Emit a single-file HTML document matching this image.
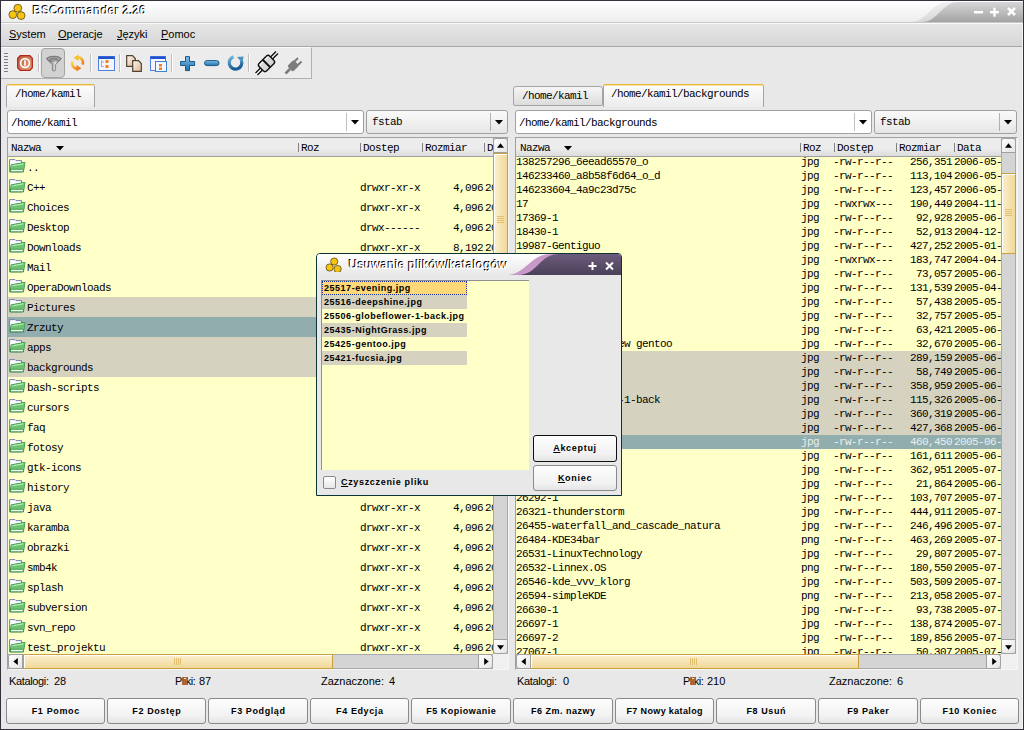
<!DOCTYPE html><html><head><meta charset="utf-8"><style>
*{margin:0;padding:0;box-sizing:border-box}
html,body{width:1024px;height:730px;overflow:hidden;background:#e8e8e8}
body{position:relative;font-family:"Liberation Sans",sans-serif}
.abs{position:absolute}
.m{position:absolute;font-family:"Liberation Mono",monospace;font-size:11px;letter-spacing:-0.6px;white-space:pre;line-height:14px;color:#000}
.s{position:absolute;font-family:"Liberation Sans",sans-serif;white-space:pre;color:#000}
.btn{position:absolute;border:1px solid #8a8a8a;border-radius:3px;background:linear-gradient(#fdfdfd,#f2f2f2 70%,#e4e4e4);font-family:"Liberation Sans",sans-serif;font-weight:bold;font-size:9px;letter-spacing:0.7px;text-align:center;white-space:pre;color:#000}
.sb{position:absolute;background:#d4d4d4}
.arr{position:absolute;background:linear-gradient(135deg,#ffffff,#e4e4e4);border:1px solid #a0a0a0;border-radius:3px}
.sl{position:absolute;border:1px solid #c8a040;box-shadow:inset 1px 1px 0 #fff;background:linear-gradient(90deg,#fcf0d0,#f0d898)}
.slh{position:absolute;border:1px solid #c8a040;box-shadow:inset 1px 1px 0 #fff;background:linear-gradient(#fcf0d0,#f0d898)}
</style></head><body>

<div class="abs" style="left:0;top:0;width:1024px;height:730px;border:1px solid #34303c"></div>
<div class="abs" style="left:1022px;top:23px;width:1px;height:706px;background:#f4f4f4"></div>
<svg class="abs" style="left:1px;top:1px" width="1022" height="22" viewBox="0 0 1022 22">
<defs><linearGradient id="tg" x1="0" y1="0" x2="0" y2="1"><stop offset="0" stop-color="#ffffff"/><stop offset="1" stop-color="#ececec"/></linearGradient>
<linearGradient id="tg2" x1="0" y1="0" x2="0" y2="1"><stop offset="0" stop-color="#d6d6d6"/><stop offset="1" stop-color="#a4a4a4"/></linearGradient>
<linearGradient id="tg3" x1="0" y1="0" x2="0" y2="1"><stop offset="0" stop-color="#f0f0f0"/><stop offset="1" stop-color="#d8d8d8"/></linearGradient></defs>
<rect width="1022" height="22" fill="url(#tg)"/>
<path d="M909 21 C927 21 929 1 948 1 L1022 1 L1022 21 Z" fill="url(#tg3)"/>
<path d="M920 21 C938 21 940 1 958 1 L1022 1 L1022 21 Z" fill="url(#tg2)"/>
<rect y="21" width="1022" height="1" fill="#c8c8c8"/>
<g fill="#fff" stroke="#fff"><rect x="973" y="10" width="9" height="2.4" stroke="none"/>
<rect x="989" y="10" width="9" height="2.4" stroke="none"/><rect x="992.3" y="6.7" width="2.4" height="9" stroke="none"/>
<path d="M1007 7 L1014 14 M1014 7 L1007 14" stroke-width="2.6"/></g>
</svg>
<svg class="abs" style="left:8px;top:2px" width="20" height="19" viewBox="0 0 20 19"><circle cx="9.8" cy="6.2" r="3.9" fill="#f6c414" stroke="#5a4a10" stroke-width="0.8"/><circle cx="4.8" cy="12.6" r="3.9" fill="#f6c414" stroke="#5a4a10" stroke-width="0.8"/><circle cx="13.1" cy="13.6" r="3.9" fill="#f6c414" stroke="#5a4a10" stroke-width="0.8"/></svg>
<div class="s" style="left:32px;top:3px;font-size:12px;line-height:14px;font-weight:bold;color:#000">BSCommander 2.26</div><div class="s" style="left:33px;top:4px;font-size:12px;line-height:14px;font-weight:bold;color:#fff">BSCommander 2.26</div>
<div class="abs" style="left:1px;top:23px;width:1021px;height:24px;background:linear-gradient(#e6e6e6,#d6d6d6);border-top:1px solid #fafafa;border-bottom:1px solid #a8a8a8"></div>
<div class="s" style="left:9px;top:28px;font-size:11px;line-height:12px;"><span style="text-decoration:underline">S</span>ystem</div>
<div class="s" style="left:58px;top:28px;font-size:11px;line-height:12px;"><span style="text-decoration:underline">O</span>peracje</div>
<div class="s" style="left:117px;top:28px;font-size:11px;line-height:12px;"><span style="text-decoration:underline">J</span>ęzyki</div>
<div class="s" style="left:161px;top:28px;font-size:11px;line-height:12px;"><span style="text-decoration:underline">P</span>omoc</div>
<div class="abs" style="left:1px;top:47px;width:311px;height:32px;border-top:1px solid #fafafa;border-right:1px solid #b0b0b0;border-bottom:1px solid #b0b0b0;background:#ececec"></div>
<div class="abs" style="left:4px;top:53px;width:4px;height:1px;background:#808080"></div>
<div class="abs" style="left:4px;top:56px;width:4px;height:1px;background:#808080"></div>
<div class="abs" style="left:4px;top:59px;width:4px;height:1px;background:#808080"></div>
<div class="abs" style="left:4px;top:62px;width:4px;height:1px;background:#808080"></div>
<div class="abs" style="left:4px;top:65px;width:4px;height:1px;background:#808080"></div>
<div class="abs" style="left:4px;top:68px;width:4px;height:1px;background:#808080"></div>
<div class="abs" style="left:4px;top:71px;width:4px;height:1px;background:#808080"></div>
<div class="abs" style="left:38px;top:54px;width:1px;height:18px;background:#c0c0c0"></div><div class="abs" style="left:39px;top:54px;width:1px;height:18px;background:#fff"></div>
<div class="abs" style="left:90px;top:54px;width:1px;height:18px;background:#c0c0c0"></div><div class="abs" style="left:91px;top:54px;width:1px;height:18px;background:#fff"></div>
<div class="abs" style="left:119px;top:54px;width:1px;height:18px;background:#c0c0c0"></div><div class="abs" style="left:120px;top:54px;width:1px;height:18px;background:#fff"></div>
<div class="abs" style="left:171px;top:54px;width:1px;height:18px;background:#c0c0c0"></div><div class="abs" style="left:172px;top:54px;width:1px;height:18px;background:#fff"></div>
<div class="abs" style="left:248px;top:54px;width:1px;height:18px;background:#c0c0c0"></div><div class="abs" style="left:249px;top:54px;width:1px;height:18px;background:#fff"></div>
<div class="abs" style="left:41px;top:48px;width:24px;height:30px;border:1px solid #a4a4a4;border-radius:4px;background:#d2d2d2"></div>
<svg class="abs" style="left:17px;top:55px" width="16" height="16" viewBox="0 0 16 16"><defs><linearGradient id="pw" x1="0" y1="0" x2="1" y2="1"><stop offset="0" stop-color="#c05838"/><stop offset="1" stop-color="#e8a880"/></linearGradient></defs><path d="M3.2 0.7 H12.8 L15.3 3.2 V12.8 L12.8 15.3 H3.2 L0.7 12.8 V3.2 Z" fill="url(#pw)" stroke="#b02818" stroke-width="1.3"/><circle cx="8" cy="8" r="4.4" fill="none" stroke="#fff" stroke-width="1.6"/><rect x="7.2" y="5.2" width="1.6" height="5.6" fill="#fff"/></svg><svg class="abs" style="left:46px;top:55px" width="16" height="17" viewBox="0 0 16 17"><defs><linearGradient id="fn" x1="0" y1="0" x2="1" y2="0"><stop offset="0" stop-color="#404040"/><stop offset="0.6" stop-color="#e0e0e0"/><stop offset="1" stop-color="#505050"/></linearGradient><linearGradient id="fr" x1="0" y1="0" x2="0" y2="1"><stop offset="0" stop-color="#8a8a8a"/><stop offset="1" stop-color="#d8d8d8"/></linearGradient></defs><path d="M0.6 4 C0.6 1 15.2 1 15.2 4 L9.6 9.5 L9.6 15 C9.6 16.3 6.4 16.3 6.4 15 L6.4 9.5 Z" fill="url(#fn)" stroke="#6a6a6a" stroke-width="0.7"/><ellipse cx="7.9" cy="3.6" rx="6.8" ry="2.4" fill="url(#fr)" stroke="#606060" stroke-width="0.6"/><ellipse cx="7.9" cy="4" rx="5" ry="1.3" fill="#8a8a8a"/></svg><svg class="abs" style="left:69px;top:54px" width="17" height="18" viewBox="0 0 17 18"><defs><linearGradient id="or" x1="0" y1="0" x2="1" y2="1"><stop offset="0" stop-color="#ffe040"/><stop offset="1" stop-color="#f07818"/></linearGradient></defs><g fill="none" stroke="url(#or)" stroke-width="2.6" stroke-linecap="butt"><path d="M7.5 3.4 A5.4 5.4 0 0 1 13.6 10.6"/><path d="M9.5 14.6 A5.4 5.4 0 0 1 3.4 7.4"/></g><path d="M4.5 3.8 L9.5 0.5 L9.5 7 Z" fill="#f8c030"/><path d="M12.5 14.2 L7.5 17.5 L7.5 11 Z" fill="#f08020"/></svg><svg class="abs" style="left:98px;top:56px" width="17" height="15" viewBox="0 0 17 15"><rect x="0.5" y="0.5" width="16" height="14" fill="#f4f6ff" stroke="#5080e0" stroke-width="1"/><rect x="0.5" y="0.5" width="16" height="2.5" fill="#2050d0"/><rect x="7.5" y="4" width="3" height="3" fill="#f08020"/><rect x="7.5" y="9" width="3" height="3" fill="#f08020"/><path d="M3.5 4 L3.5 11 M3.5 6 L6 6 M3.5 10.5 L6 10.5" stroke="#a0a0a0" stroke-width="0.8" fill="none"/></svg><svg class="abs" style="left:126px;top:55px" width="17" height="17" viewBox="0 0 17 17"><defs><linearGradient id="cp" x1="0" y1="0" x2="1" y2="1"><stop offset="0" stop-color="#fff8f0"/><stop offset="1" stop-color="#d8b890"/></linearGradient></defs><path d="M0.7 0.7 L6.5 0.7 L9.3 3.5 L9.3 11.3 L0.7 11.3 Z" fill="url(#cp)" stroke="#504030" stroke-width="1.2"/><path d="M6.7 5.7 L12.5 5.7 L15.3 8.5 L15.3 16.3 L6.7 16.3 Z" fill="url(#cp)" stroke="#504030" stroke-width="1.2"/></svg><svg class="abs" style="left:150px;top:56px" width="17" height="16" viewBox="0 0 17 16"><rect x="0.5" y="0.5" width="15" height="14" fill="#f4f6ff" stroke="#5080e0" stroke-width="1"/><rect x="0.5" y="0.5" width="15" height="2.5" fill="#2050d0"/><rect x="5.5" y="5.5" width="11" height="10" fill="#f4f6ff" stroke="#4080d0" stroke-width="1"/><rect x="9" y="8" width="3" height="2.5" fill="#f08020"/><rect x="9" y="11.5" width="3" height="2.5" fill="#f08020"/></svg><svg class="abs" style="left:180px;top:56px" width="16" height="16" viewBox="0 0 16 16"><defs><linearGradient id="bl" x1="0" y1="0" x2="0" y2="1"><stop offset="0" stop-color="#80c0e8"/><stop offset="1" stop-color="#2070a8"/></linearGradient></defs><path d="M5.5 0.6 H9.5 V5.5 H14.6 V9.5 H9.5 V14.6 H5.5 V9.5 H0.6 V5.5 H5.5 Z" fill="url(#bl)" stroke="#1a5a88" stroke-width="1" stroke-linejoin="round"/></svg><svg class="abs" style="left:204px;top:60px" width="16" height="7" viewBox="0 0 16 7"><rect x="0.6" y="0.6" width="14.4" height="5" rx="2.4" fill="url(#bl)" stroke="#1a5a88" stroke-width="1"/></svg><svg class="abs" style="left:226px;top:54px" width="19" height="19" viewBox="0 0 19 19"><defs><linearGradient id="rb" x1="0" y1="0" x2="0.3" y2="1"><stop offset="0" stop-color="#70b8e0"/><stop offset="1" stop-color="#1a5c94"/></linearGradient></defs><path d="M7.5 2.8 A6.3 6.3 0 1 0 15.4 6.6" fill="none" stroke="url(#rb)" stroke-width="3.2"/><path d="M11 3 L17.5 2.5 L16.5 9 Z" fill="#4a90c0"/></svg><svg class="abs" style="left:254px;top:51px" width="25" height="25" viewBox="0 0 25 25"><g stroke="#000" stroke-width="1.1"><path d="M1.5 22 L6.5 17 M3.5 24 L8.5 19 M16.5 6 L22 0.5 M18.5 8 L24 2.5"/></g><g transform="rotate(-45 12.5 12.5)"><rect x="5" y="7.2" width="15" height="10.6" rx="2.5" fill="#d8d8d8" stroke="#101010" stroke-width="1.4"/><path d="M12.5 7.2 V17.8" stroke="#101010" stroke-width="1.8"/><path d="M6.5 9 H11 M14 9 H18.5" stroke="#f8f8f8" stroke-width="1.2"/></g></svg><svg class="abs" style="left:284px;top:56px" width="20" height="19" viewBox="0 0 20 19"><g stroke="#7c7c7c" stroke-linecap="butt"><path d="M1.5 17.5 L6 13" stroke-width="2.6"/><path d="M10 6 L14 2 M13.5 9.5 L17.5 5.5" stroke-width="2"/></g><g transform="rotate(-45 9.5 9.5)"><rect x="4.5" y="5.5" width="9" height="8" rx="2" fill="#7c7c7c"/></g></svg>
<div class="abs" style="left:6px;top:84px;width:89px;height:23px;background:linear-gradient(#fdfdfd,#ececec);border:1px solid #a4a4a4;border-bottom:none;border-radius:3px 3px 0 0;"></div>
<div class="abs" style="left:7px;top:84px;width:87px;height:1px;background:#e8b838"></div><div class="abs" style="left:7px;top:85px;width:87px;height:1px;background:#f8e0a0"></div>
<div class="m" style="left:15px;top:87px">/home/kamil</div>
<div class="abs" style="left:513px;top:86px;width:90px;height:20px;background:linear-gradient(#f6f6f6,#dcdcdc);border:1px solid #a4a4a4;border-radius:3px 3px 2px 2px;"></div>
<div class="m" style="left:522px;top:89px">/home/kamil</div>
<div class="abs" style="left:603px;top:84px;width:161px;height:23px;background:linear-gradient(#fdfdfd,#ececec);border:1px solid #a4a4a4;border-bottom:none;border-radius:3px 3px 0 0;"></div>
<div class="abs" style="left:604px;top:84px;width:159px;height:1px;background:#e8b838"></div><div class="abs" style="left:604px;top:85px;width:159px;height:1px;background:#f8e0a0"></div>
<div class="m" style="left:611px;top:87px">/home/kamil/backgrounds</div>
<div class="abs" style="left:7px;top:110px;width:357px;height:24px;background:#fff;border:1px solid #a0a0a0;border-radius:3px"></div>
<div class="abs" style="left:346px;top:113px;width:1px;height:18px;background:#c0c0c0"></div>
<svg class="abs" style="left:351px;top:120px" width="8" height="5" viewBox="0 0 8 5"><path d="M0 0 H8 L4 4.5 Z" fill="#000"/></svg>
<div class="m" style="left:11px;top:116px">/home/kamil</div>
<div class="abs" style="left:366px;top:110px;width:142px;height:24px;background:linear-gradient(#fafafa,#e6e6e6);border:1px solid #a0a0a0;border-radius:3px"></div>
<div class="abs" style="left:490px;top:113px;width:1px;height:18px;background:#b0b0b0"></div>
<svg class="abs" style="left:495px;top:120px" width="8" height="5" viewBox="0 0 8 5"><path d="M0 0 H8 L4 4.5 Z" fill="#000"/></svg>
<div class="m" style="left:372px;top:115px">fstab</div>
<div class="abs" style="left:515px;top:110px;width:357px;height:24px;background:#fff;border:1px solid #a0a0a0;border-radius:3px"></div>
<div class="abs" style="left:854px;top:113px;width:1px;height:18px;background:#c0c0c0"></div>
<svg class="abs" style="left:859px;top:120px" width="8" height="5" viewBox="0 0 8 5"><path d="M0 0 H8 L4 4.5 Z" fill="#000"/></svg>
<div class="m" style="left:519px;top:116px">/home/kamil/backgrounds</div>
<div class="abs" style="left:874px;top:110px;width:143px;height:24px;background:linear-gradient(#fafafa,#e6e6e6);border:1px solid #a0a0a0;border-radius:3px"></div>
<div class="abs" style="left:999px;top:113px;width:1px;height:18px;background:#b0b0b0"></div>
<svg class="abs" style="left:1004px;top:120px" width="8" height="5" viewBox="0 0 8 5"><path d="M0 0 H8 L4 4.5 Z" fill="#000"/></svg>
<div class="m" style="left:880px;top:115px">fstab</div>
<div class="abs" style="left:7px;top:137px;width:502px;height:533px;border:1px solid #a0a0a0;border-right-color:#f6f6f6;border-bottom-color:#f6f6f6;background:#f0f0f0"></div>
<div class="abs" style="left:8px;top:156px;width:485px;height:498px;background:#ffffc8"></div>
<div class="abs" style="left:8px;top:138px;width:485px;height:19px;background:linear-gradient(#ececec 60%,#dcdcdc);border-bottom:1px solid #a0a0a0"></div>
<div class="m" style="left:11px;top:141px">Nazwa</div>
<div class="abs" style="left:298px;top:143px;width:1px;height:9px;background:#808080"></div>
<div class="m" style="left:301px;top:141px">Roz</div>
<div class="abs" style="left:360px;top:143px;width:1px;height:9px;background:#808080"></div>
<div class="m" style="left:363px;top:141px">Dostęp</div>
<div class="abs" style="left:422px;top:143px;width:1px;height:9px;background:#808080"></div>
<div class="m" style="left:425px;top:141px">Rozmiar</div>
<div class="abs" style="left:484px;top:143px;width:1px;height:9px;background:#808080"></div>
<div class="m" style="left:487px;top:141px">D</div>
<svg class="abs" style="left:56px;top:146px" width="8" height="5" viewBox="0 0 8 5"><path d="M0 0 H8 L4 4.5 Z" fill="#000"/></svg>
<div class="abs" style="left:8px;top:157px;width:485px;height:497px;overflow:hidden">
<svg class="abs" style="left:1px;top:2px" width="17" height="14" viewBox="0 0 17 14"><path d="M0.6 12.8 V0.6 H6 L7 1.6 H12.6 V12.8 Z" fill="#fbfbff" stroke="#7880a8" stroke-width="1"/><path d="M1.2 12.9 L2.2 5.9 L15.9 3.4 L14.4 12.9 Z" fill="#f6f6f6" stroke="#1e8a30" stroke-width="1"/><path d="M2.2 5.9 L15.9 3.4 L14.8 10.4 L1.6 10.4 Z" fill="#6ec072"/><path d="M1.6 10.3 L14.8 10.3" stroke="#2a9a3a" stroke-width="0.7"/><path d="M3.2 6.9 L14.6 4.8" stroke="#b4f4b4" stroke-width="1"/></svg>
<div class="m" style="left:19px;top:4px">..</div>
<svg class="abs" style="left:1px;top:22px" width="17" height="14" viewBox="0 0 17 14"><path d="M0.6 12.8 V0.6 H6 L7 1.6 H12.6 V12.8 Z" fill="#fbfbff" stroke="#7880a8" stroke-width="1"/><path d="M1.2 12.9 L2.2 5.9 L15.9 3.4 L14.4 12.9 Z" fill="#f6f6f6" stroke="#1e8a30" stroke-width="1"/><path d="M2.2 5.9 L15.9 3.4 L14.8 10.4 L1.6 10.4 Z" fill="#6ec072"/><path d="M1.6 10.3 L14.8 10.3" stroke="#2a9a3a" stroke-width="0.7"/><path d="M3.2 6.9 L14.6 4.8" stroke="#b4f4b4" stroke-width="1"/></svg>
<div class="m" style="left:19px;top:24px">C++</div>
<div class="m" style="left:352px;top:24px">drwxr-xr-x</div>
<div class="m" style="left:410px;top:24px;width:65px;text-align:right">4,096</div>
<div class="m" style="left:477px;top:24px">20</div>
<svg class="abs" style="left:1px;top:42px" width="17" height="14" viewBox="0 0 17 14"><path d="M0.6 12.8 V0.6 H6 L7 1.6 H12.6 V12.8 Z" fill="#fbfbff" stroke="#7880a8" stroke-width="1"/><path d="M1.2 12.9 L2.2 5.9 L15.9 3.4 L14.4 12.9 Z" fill="#f6f6f6" stroke="#1e8a30" stroke-width="1"/><path d="M2.2 5.9 L15.9 3.4 L14.8 10.4 L1.6 10.4 Z" fill="#6ec072"/><path d="M1.6 10.3 L14.8 10.3" stroke="#2a9a3a" stroke-width="0.7"/><path d="M3.2 6.9 L14.6 4.8" stroke="#b4f4b4" stroke-width="1"/></svg>
<div class="m" style="left:19px;top:44px">Choices</div>
<div class="m" style="left:352px;top:44px">drwxr-xr-x</div>
<div class="m" style="left:410px;top:44px;width:65px;text-align:right">4,096</div>
<div class="m" style="left:477px;top:44px">20</div>
<svg class="abs" style="left:1px;top:62px" width="17" height="14" viewBox="0 0 17 14"><path d="M0.6 12.8 V0.6 H6 L7 1.6 H12.6 V12.8 Z" fill="#fbfbff" stroke="#7880a8" stroke-width="1"/><path d="M1.2 12.9 L2.2 5.9 L15.9 3.4 L14.4 12.9 Z" fill="#f6f6f6" stroke="#1e8a30" stroke-width="1"/><path d="M2.2 5.9 L15.9 3.4 L14.8 10.4 L1.6 10.4 Z" fill="#6ec072"/><path d="M1.6 10.3 L14.8 10.3" stroke="#2a9a3a" stroke-width="0.7"/><path d="M3.2 6.9 L14.6 4.8" stroke="#b4f4b4" stroke-width="1"/></svg>
<div class="m" style="left:19px;top:64px">Desktop</div>
<div class="m" style="left:352px;top:64px">drwx------</div>
<div class="m" style="left:410px;top:64px;width:65px;text-align:right">4,096</div>
<div class="m" style="left:477px;top:64px">20</div>
<svg class="abs" style="left:1px;top:82px" width="17" height="14" viewBox="0 0 17 14"><path d="M0.6 12.8 V0.6 H6 L7 1.6 H12.6 V12.8 Z" fill="#fbfbff" stroke="#7880a8" stroke-width="1"/><path d="M1.2 12.9 L2.2 5.9 L15.9 3.4 L14.4 12.9 Z" fill="#f6f6f6" stroke="#1e8a30" stroke-width="1"/><path d="M2.2 5.9 L15.9 3.4 L14.8 10.4 L1.6 10.4 Z" fill="#6ec072"/><path d="M1.6 10.3 L14.8 10.3" stroke="#2a9a3a" stroke-width="0.7"/><path d="M3.2 6.9 L14.6 4.8" stroke="#b4f4b4" stroke-width="1"/></svg>
<div class="m" style="left:19px;top:84px">Downloads</div>
<div class="m" style="left:352px;top:84px">drwxr-xr-x</div>
<div class="m" style="left:410px;top:84px;width:65px;text-align:right">8,192</div>
<div class="m" style="left:477px;top:84px">20</div>
<svg class="abs" style="left:1px;top:102px" width="17" height="14" viewBox="0 0 17 14"><path d="M0.6 12.8 V0.6 H6 L7 1.6 H12.6 V12.8 Z" fill="#fbfbff" stroke="#7880a8" stroke-width="1"/><path d="M1.2 12.9 L2.2 5.9 L15.9 3.4 L14.4 12.9 Z" fill="#f6f6f6" stroke="#1e8a30" stroke-width="1"/><path d="M2.2 5.9 L15.9 3.4 L14.8 10.4 L1.6 10.4 Z" fill="#6ec072"/><path d="M1.6 10.3 L14.8 10.3" stroke="#2a9a3a" stroke-width="0.7"/><path d="M3.2 6.9 L14.6 4.8" stroke="#b4f4b4" stroke-width="1"/></svg>
<div class="m" style="left:19px;top:104px">Mail</div>
<div class="m" style="left:352px;top:104px">drwxr-xr-x</div>
<div class="m" style="left:410px;top:104px;width:65px;text-align:right">4,096</div>
<div class="m" style="left:477px;top:104px">20</div>
<svg class="abs" style="left:1px;top:122px" width="17" height="14" viewBox="0 0 17 14"><path d="M0.6 12.8 V0.6 H6 L7 1.6 H12.6 V12.8 Z" fill="#fbfbff" stroke="#7880a8" stroke-width="1"/><path d="M1.2 12.9 L2.2 5.9 L15.9 3.4 L14.4 12.9 Z" fill="#f6f6f6" stroke="#1e8a30" stroke-width="1"/><path d="M2.2 5.9 L15.9 3.4 L14.8 10.4 L1.6 10.4 Z" fill="#6ec072"/><path d="M1.6 10.3 L14.8 10.3" stroke="#2a9a3a" stroke-width="0.7"/><path d="M3.2 6.9 L14.6 4.8" stroke="#b4f4b4" stroke-width="1"/></svg>
<div class="m" style="left:19px;top:124px">OperaDownloads</div>
<div class="m" style="left:352px;top:124px">drwxr-xr-x</div>
<div class="m" style="left:410px;top:124px;width:65px;text-align:right">4,096</div>
<div class="m" style="left:477px;top:124px">20</div>
<div class="abs" style="left:0;top:140px;width:485px;height:20px;background:#d5d3c0"></div>
<svg class="abs" style="left:1px;top:142px" width="17" height="14" viewBox="0 0 17 14"><path d="M0.6 12.8 V0.6 H6 L7 1.6 H12.6 V12.8 Z" fill="#fbfbff" stroke="#7880a8" stroke-width="1"/><path d="M1.2 12.9 L2.2 5.9 L15.9 3.4 L14.4 12.9 Z" fill="#f6f6f6" stroke="#1e8a30" stroke-width="1"/><path d="M2.2 5.9 L15.9 3.4 L14.8 10.4 L1.6 10.4 Z" fill="#6ec072"/><path d="M1.6 10.3 L14.8 10.3" stroke="#2a9a3a" stroke-width="0.7"/><path d="M3.2 6.9 L14.6 4.8" stroke="#b4f4b4" stroke-width="1"/></svg>
<div class="m" style="left:19px;top:144px">Pictures</div>
<div class="m" style="left:352px;top:144px">drwxr-xr-x</div>
<div class="m" style="left:410px;top:144px;width:65px;text-align:right">4,096</div>
<div class="m" style="left:477px;top:144px">20</div>
<div class="abs" style="left:0;top:160px;width:485px;height:20px;background:#91adad"></div>
<svg class="abs" style="left:1px;top:162px" width="17" height="14" viewBox="0 0 17 14"><path d="M0.6 12.8 V0.6 H6 L7 1.6 H12.6 V12.8 Z" fill="#fbfbff" stroke="#7880a8" stroke-width="1"/><path d="M1.2 12.9 L2.2 5.9 L15.9 3.4 L14.4 12.9 Z" fill="#f6f6f6" stroke="#1e8a30" stroke-width="1"/><path d="M2.2 5.9 L15.9 3.4 L14.8 10.4 L1.6 10.4 Z" fill="#6ec072"/><path d="M1.6 10.3 L14.8 10.3" stroke="#2a9a3a" stroke-width="0.7"/><path d="M3.2 6.9 L14.6 4.8" stroke="#b4f4b4" stroke-width="1"/></svg>
<div class="m" style="left:19px;top:164px">Zrzuty</div>
<div class="m" style="left:352px;top:164px">drwxr-xr-x</div>
<div class="m" style="left:410px;top:164px;width:65px;text-align:right">4,096</div>
<div class="m" style="left:477px;top:164px">20</div>
<div class="abs" style="left:0;top:180px;width:485px;height:20px;background:#d5d3c0"></div>
<svg class="abs" style="left:1px;top:182px" width="17" height="14" viewBox="0 0 17 14"><path d="M0.6 12.8 V0.6 H6 L7 1.6 H12.6 V12.8 Z" fill="#fbfbff" stroke="#7880a8" stroke-width="1"/><path d="M1.2 12.9 L2.2 5.9 L15.9 3.4 L14.4 12.9 Z" fill="#f6f6f6" stroke="#1e8a30" stroke-width="1"/><path d="M2.2 5.9 L15.9 3.4 L14.8 10.4 L1.6 10.4 Z" fill="#6ec072"/><path d="M1.6 10.3 L14.8 10.3" stroke="#2a9a3a" stroke-width="0.7"/><path d="M3.2 6.9 L14.6 4.8" stroke="#b4f4b4" stroke-width="1"/></svg>
<div class="m" style="left:19px;top:184px">apps</div>
<div class="m" style="left:352px;top:184px">drwxr-xr-x</div>
<div class="m" style="left:410px;top:184px;width:65px;text-align:right">4,096</div>
<div class="m" style="left:477px;top:184px">20</div>
<div class="abs" style="left:0;top:200px;width:485px;height:20px;background:#d5d3c0"></div>
<svg class="abs" style="left:1px;top:202px" width="17" height="14" viewBox="0 0 17 14"><path d="M0.6 12.8 V0.6 H6 L7 1.6 H12.6 V12.8 Z" fill="#fbfbff" stroke="#7880a8" stroke-width="1"/><path d="M1.2 12.9 L2.2 5.9 L15.9 3.4 L14.4 12.9 Z" fill="#f6f6f6" stroke="#1e8a30" stroke-width="1"/><path d="M2.2 5.9 L15.9 3.4 L14.8 10.4 L1.6 10.4 Z" fill="#6ec072"/><path d="M1.6 10.3 L14.8 10.3" stroke="#2a9a3a" stroke-width="0.7"/><path d="M3.2 6.9 L14.6 4.8" stroke="#b4f4b4" stroke-width="1"/></svg>
<div class="m" style="left:19px;top:204px">backgrounds</div>
<div class="m" style="left:352px;top:204px">drwxr-xr-x</div>
<div class="m" style="left:410px;top:204px;width:65px;text-align:right">4,096</div>
<div class="m" style="left:477px;top:204px">20</div>
<svg class="abs" style="left:1px;top:222px" width="17" height="14" viewBox="0 0 17 14"><path d="M0.6 12.8 V0.6 H6 L7 1.6 H12.6 V12.8 Z" fill="#fbfbff" stroke="#7880a8" stroke-width="1"/><path d="M1.2 12.9 L2.2 5.9 L15.9 3.4 L14.4 12.9 Z" fill="#f6f6f6" stroke="#1e8a30" stroke-width="1"/><path d="M2.2 5.9 L15.9 3.4 L14.8 10.4 L1.6 10.4 Z" fill="#6ec072"/><path d="M1.6 10.3 L14.8 10.3" stroke="#2a9a3a" stroke-width="0.7"/><path d="M3.2 6.9 L14.6 4.8" stroke="#b4f4b4" stroke-width="1"/></svg>
<div class="m" style="left:19px;top:224px">bash-scripts</div>
<div class="m" style="left:352px;top:224px">drwxr-xr-x</div>
<div class="m" style="left:410px;top:224px;width:65px;text-align:right">4,096</div>
<div class="m" style="left:477px;top:224px">20</div>
<svg class="abs" style="left:1px;top:242px" width="17" height="14" viewBox="0 0 17 14"><path d="M0.6 12.8 V0.6 H6 L7 1.6 H12.6 V12.8 Z" fill="#fbfbff" stroke="#7880a8" stroke-width="1"/><path d="M1.2 12.9 L2.2 5.9 L15.9 3.4 L14.4 12.9 Z" fill="#f6f6f6" stroke="#1e8a30" stroke-width="1"/><path d="M2.2 5.9 L15.9 3.4 L14.8 10.4 L1.6 10.4 Z" fill="#6ec072"/><path d="M1.6 10.3 L14.8 10.3" stroke="#2a9a3a" stroke-width="0.7"/><path d="M3.2 6.9 L14.6 4.8" stroke="#b4f4b4" stroke-width="1"/></svg>
<div class="m" style="left:19px;top:244px">cursors</div>
<div class="m" style="left:352px;top:244px">drwxr-xr-x</div>
<div class="m" style="left:410px;top:244px;width:65px;text-align:right">4,096</div>
<div class="m" style="left:477px;top:244px">20</div>
<svg class="abs" style="left:1px;top:262px" width="17" height="14" viewBox="0 0 17 14"><path d="M0.6 12.8 V0.6 H6 L7 1.6 H12.6 V12.8 Z" fill="#fbfbff" stroke="#7880a8" stroke-width="1"/><path d="M1.2 12.9 L2.2 5.9 L15.9 3.4 L14.4 12.9 Z" fill="#f6f6f6" stroke="#1e8a30" stroke-width="1"/><path d="M2.2 5.9 L15.9 3.4 L14.8 10.4 L1.6 10.4 Z" fill="#6ec072"/><path d="M1.6 10.3 L14.8 10.3" stroke="#2a9a3a" stroke-width="0.7"/><path d="M3.2 6.9 L14.6 4.8" stroke="#b4f4b4" stroke-width="1"/></svg>
<div class="m" style="left:19px;top:264px">faq</div>
<div class="m" style="left:352px;top:264px">drwxr-xr-x</div>
<div class="m" style="left:410px;top:264px;width:65px;text-align:right">4,096</div>
<div class="m" style="left:477px;top:264px">20</div>
<svg class="abs" style="left:1px;top:282px" width="17" height="14" viewBox="0 0 17 14"><path d="M0.6 12.8 V0.6 H6 L7 1.6 H12.6 V12.8 Z" fill="#fbfbff" stroke="#7880a8" stroke-width="1"/><path d="M1.2 12.9 L2.2 5.9 L15.9 3.4 L14.4 12.9 Z" fill="#f6f6f6" stroke="#1e8a30" stroke-width="1"/><path d="M2.2 5.9 L15.9 3.4 L14.8 10.4 L1.6 10.4 Z" fill="#6ec072"/><path d="M1.6 10.3 L14.8 10.3" stroke="#2a9a3a" stroke-width="0.7"/><path d="M3.2 6.9 L14.6 4.8" stroke="#b4f4b4" stroke-width="1"/></svg>
<div class="m" style="left:19px;top:284px">fotosy</div>
<div class="m" style="left:352px;top:284px">drwxr-xr-x</div>
<div class="m" style="left:410px;top:284px;width:65px;text-align:right">4,096</div>
<div class="m" style="left:477px;top:284px">20</div>
<svg class="abs" style="left:1px;top:302px" width="17" height="14" viewBox="0 0 17 14"><path d="M0.6 12.8 V0.6 H6 L7 1.6 H12.6 V12.8 Z" fill="#fbfbff" stroke="#7880a8" stroke-width="1"/><path d="M1.2 12.9 L2.2 5.9 L15.9 3.4 L14.4 12.9 Z" fill="#f6f6f6" stroke="#1e8a30" stroke-width="1"/><path d="M2.2 5.9 L15.9 3.4 L14.8 10.4 L1.6 10.4 Z" fill="#6ec072"/><path d="M1.6 10.3 L14.8 10.3" stroke="#2a9a3a" stroke-width="0.7"/><path d="M3.2 6.9 L14.6 4.8" stroke="#b4f4b4" stroke-width="1"/></svg>
<div class="m" style="left:19px;top:304px">gtk-icons</div>
<div class="m" style="left:352px;top:304px">drwxr-xr-x</div>
<div class="m" style="left:410px;top:304px;width:65px;text-align:right">4,096</div>
<div class="m" style="left:477px;top:304px">20</div>
<svg class="abs" style="left:1px;top:322px" width="17" height="14" viewBox="0 0 17 14"><path d="M0.6 12.8 V0.6 H6 L7 1.6 H12.6 V12.8 Z" fill="#fbfbff" stroke="#7880a8" stroke-width="1"/><path d="M1.2 12.9 L2.2 5.9 L15.9 3.4 L14.4 12.9 Z" fill="#f6f6f6" stroke="#1e8a30" stroke-width="1"/><path d="M2.2 5.9 L15.9 3.4 L14.8 10.4 L1.6 10.4 Z" fill="#6ec072"/><path d="M1.6 10.3 L14.8 10.3" stroke="#2a9a3a" stroke-width="0.7"/><path d="M3.2 6.9 L14.6 4.8" stroke="#b4f4b4" stroke-width="1"/></svg>
<div class="m" style="left:19px;top:324px">history</div>
<div class="m" style="left:352px;top:324px">drwxr-xr-x</div>
<div class="m" style="left:410px;top:324px;width:65px;text-align:right">4,096</div>
<div class="m" style="left:477px;top:324px">20</div>
<svg class="abs" style="left:1px;top:342px" width="17" height="14" viewBox="0 0 17 14"><path d="M0.6 12.8 V0.6 H6 L7 1.6 H12.6 V12.8 Z" fill="#fbfbff" stroke="#7880a8" stroke-width="1"/><path d="M1.2 12.9 L2.2 5.9 L15.9 3.4 L14.4 12.9 Z" fill="#f6f6f6" stroke="#1e8a30" stroke-width="1"/><path d="M2.2 5.9 L15.9 3.4 L14.8 10.4 L1.6 10.4 Z" fill="#6ec072"/><path d="M1.6 10.3 L14.8 10.3" stroke="#2a9a3a" stroke-width="0.7"/><path d="M3.2 6.9 L14.6 4.8" stroke="#b4f4b4" stroke-width="1"/></svg>
<div class="m" style="left:19px;top:344px">java</div>
<div class="m" style="left:352px;top:344px">drwxr-xr-x</div>
<div class="m" style="left:410px;top:344px;width:65px;text-align:right">4,096</div>
<div class="m" style="left:477px;top:344px">20</div>
<svg class="abs" style="left:1px;top:362px" width="17" height="14" viewBox="0 0 17 14"><path d="M0.6 12.8 V0.6 H6 L7 1.6 H12.6 V12.8 Z" fill="#fbfbff" stroke="#7880a8" stroke-width="1"/><path d="M1.2 12.9 L2.2 5.9 L15.9 3.4 L14.4 12.9 Z" fill="#f6f6f6" stroke="#1e8a30" stroke-width="1"/><path d="M2.2 5.9 L15.9 3.4 L14.8 10.4 L1.6 10.4 Z" fill="#6ec072"/><path d="M1.6 10.3 L14.8 10.3" stroke="#2a9a3a" stroke-width="0.7"/><path d="M3.2 6.9 L14.6 4.8" stroke="#b4f4b4" stroke-width="1"/></svg>
<div class="m" style="left:19px;top:364px">karamba</div>
<div class="m" style="left:352px;top:364px">drwxr-xr-x</div>
<div class="m" style="left:410px;top:364px;width:65px;text-align:right">4,096</div>
<div class="m" style="left:477px;top:364px">20</div>
<svg class="abs" style="left:1px;top:382px" width="17" height="14" viewBox="0 0 17 14"><path d="M0.6 12.8 V0.6 H6 L7 1.6 H12.6 V12.8 Z" fill="#fbfbff" stroke="#7880a8" stroke-width="1"/><path d="M1.2 12.9 L2.2 5.9 L15.9 3.4 L14.4 12.9 Z" fill="#f6f6f6" stroke="#1e8a30" stroke-width="1"/><path d="M2.2 5.9 L15.9 3.4 L14.8 10.4 L1.6 10.4 Z" fill="#6ec072"/><path d="M1.6 10.3 L14.8 10.3" stroke="#2a9a3a" stroke-width="0.7"/><path d="M3.2 6.9 L14.6 4.8" stroke="#b4f4b4" stroke-width="1"/></svg>
<div class="m" style="left:19px;top:384px">obrazki</div>
<div class="m" style="left:352px;top:384px">drwxr-xr-x</div>
<div class="m" style="left:410px;top:384px;width:65px;text-align:right">4,096</div>
<div class="m" style="left:477px;top:384px">20</div>
<svg class="abs" style="left:1px;top:402px" width="17" height="14" viewBox="0 0 17 14"><path d="M0.6 12.8 V0.6 H6 L7 1.6 H12.6 V12.8 Z" fill="#fbfbff" stroke="#7880a8" stroke-width="1"/><path d="M1.2 12.9 L2.2 5.9 L15.9 3.4 L14.4 12.9 Z" fill="#f6f6f6" stroke="#1e8a30" stroke-width="1"/><path d="M2.2 5.9 L15.9 3.4 L14.8 10.4 L1.6 10.4 Z" fill="#6ec072"/><path d="M1.6 10.3 L14.8 10.3" stroke="#2a9a3a" stroke-width="0.7"/><path d="M3.2 6.9 L14.6 4.8" stroke="#b4f4b4" stroke-width="1"/></svg>
<div class="m" style="left:19px;top:404px">smb4k</div>
<div class="m" style="left:352px;top:404px">drwxr-xr-x</div>
<div class="m" style="left:410px;top:404px;width:65px;text-align:right">4,096</div>
<div class="m" style="left:477px;top:404px">20</div>
<svg class="abs" style="left:1px;top:422px" width="17" height="14" viewBox="0 0 17 14"><path d="M0.6 12.8 V0.6 H6 L7 1.6 H12.6 V12.8 Z" fill="#fbfbff" stroke="#7880a8" stroke-width="1"/><path d="M1.2 12.9 L2.2 5.9 L15.9 3.4 L14.4 12.9 Z" fill="#f6f6f6" stroke="#1e8a30" stroke-width="1"/><path d="M2.2 5.9 L15.9 3.4 L14.8 10.4 L1.6 10.4 Z" fill="#6ec072"/><path d="M1.6 10.3 L14.8 10.3" stroke="#2a9a3a" stroke-width="0.7"/><path d="M3.2 6.9 L14.6 4.8" stroke="#b4f4b4" stroke-width="1"/></svg>
<div class="m" style="left:19px;top:424px">splash</div>
<div class="m" style="left:352px;top:424px">drwxr-xr-x</div>
<div class="m" style="left:410px;top:424px;width:65px;text-align:right">4,096</div>
<div class="m" style="left:477px;top:424px">20</div>
<svg class="abs" style="left:1px;top:442px" width="17" height="14" viewBox="0 0 17 14"><path d="M0.6 12.8 V0.6 H6 L7 1.6 H12.6 V12.8 Z" fill="#fbfbff" stroke="#7880a8" stroke-width="1"/><path d="M1.2 12.9 L2.2 5.9 L15.9 3.4 L14.4 12.9 Z" fill="#f6f6f6" stroke="#1e8a30" stroke-width="1"/><path d="M2.2 5.9 L15.9 3.4 L14.8 10.4 L1.6 10.4 Z" fill="#6ec072"/><path d="M1.6 10.3 L14.8 10.3" stroke="#2a9a3a" stroke-width="0.7"/><path d="M3.2 6.9 L14.6 4.8" stroke="#b4f4b4" stroke-width="1"/></svg>
<div class="m" style="left:19px;top:444px">subversion</div>
<div class="m" style="left:352px;top:444px">drwxr-xr-x</div>
<div class="m" style="left:410px;top:444px;width:65px;text-align:right">4,096</div>
<div class="m" style="left:477px;top:444px">20</div>
<svg class="abs" style="left:1px;top:462px" width="17" height="14" viewBox="0 0 17 14"><path d="M0.6 12.8 V0.6 H6 L7 1.6 H12.6 V12.8 Z" fill="#fbfbff" stroke="#7880a8" stroke-width="1"/><path d="M1.2 12.9 L2.2 5.9 L15.9 3.4 L14.4 12.9 Z" fill="#f6f6f6" stroke="#1e8a30" stroke-width="1"/><path d="M2.2 5.9 L15.9 3.4 L14.8 10.4 L1.6 10.4 Z" fill="#6ec072"/><path d="M1.6 10.3 L14.8 10.3" stroke="#2a9a3a" stroke-width="0.7"/><path d="M3.2 6.9 L14.6 4.8" stroke="#b4f4b4" stroke-width="1"/></svg>
<div class="m" style="left:19px;top:464px">svn_repo</div>
<div class="m" style="left:352px;top:464px">drwxr-xr-x</div>
<div class="m" style="left:410px;top:464px;width:65px;text-align:right">4,096</div>
<div class="m" style="left:477px;top:464px">20</div>
<svg class="abs" style="left:1px;top:482px" width="17" height="14" viewBox="0 0 17 14"><path d="M0.6 12.8 V0.6 H6 L7 1.6 H12.6 V12.8 Z" fill="#fbfbff" stroke="#7880a8" stroke-width="1"/><path d="M1.2 12.9 L2.2 5.9 L15.9 3.4 L14.4 12.9 Z" fill="#f6f6f6" stroke="#1e8a30" stroke-width="1"/><path d="M2.2 5.9 L15.9 3.4 L14.8 10.4 L1.6 10.4 Z" fill="#6ec072"/><path d="M1.6 10.3 L14.8 10.3" stroke="#2a9a3a" stroke-width="0.7"/><path d="M3.2 6.9 L14.6 4.8" stroke="#b4f4b4" stroke-width="1"/></svg>
<div class="m" style="left:19px;top:484px">test_projektu</div>
<div class="m" style="left:352px;top:484px">drwxr-xr-x</div>
<div class="m" style="left:410px;top:484px;width:65px;text-align:right">4,096</div>
<div class="m" style="left:477px;top:484px">20</div>
</div>
<div class="sb" style="left:493px;top:138px;width:15px;height:516px;border-left:1px solid #a8a8b0;border-right:1px solid #a8a8b0"></div>
<div class="arr" style="left:493px;top:138px;width:15px;height:15px;border-radius:3px 3px 0 0"></div>
<svg class="abs" style="left:497px;top:143px" width="7" height="5" viewBox="0 0 7 5"><path d="M0 4.7 H7 L3.5 0.2 Z" fill="#000"/></svg>
<div class="arr" style="left:493px;top:639px;width:15px;height:15px;border-radius:0 0 3px 3px"></div>
<svg class="abs" style="left:497px;top:645px" width="7" height="5" viewBox="0 0 7 5"><path d="M0 0.3 H7 L3.5 4.8 Z" fill="#000"/></svg>
<div class="sl" style="left:493px;top:153px;width:15px;height:134px"></div>
<div class="abs" style="left:497px;top:216px;width:7px;height:1px;background:#e0c070"></div>
<div class="abs" style="left:497px;top:218px;width:7px;height:1px;background:#e0c070"></div>
<div class="abs" style="left:497px;top:220px;width:7px;height:1px;background:#e0c070"></div>
<div class="abs" style="left:497px;top:222px;width:7px;height:1px;background:#e0c070"></div>
<div class="sb" style="left:8px;top:654px;width:485px;height:15px;border-top:1px solid #a8a8b0;border-bottom:1px solid #a8a8b0"></div>
<div class="slh" style="left:23px;top:654px;width:310px;height:15px"></div>
<div class="arr" style="left:8px;top:654px;width:15px;height:15px;border-radius:3px 0 0 3px"></div>
<svg class="abs" style="left:13px;top:658px" width="5" height="7" viewBox="0 0 5 7"><path d="M4.8 0 V7 L0.3 3.5 Z" fill="#000"/></svg>
<div class="arr" style="left:478px;top:654px;width:15px;height:15px;border-radius:0 3px 3px 0"></div>
<svg class="abs" style="left:484px;top:658px" width="5" height="7" viewBox="0 0 5 7"><path d="M0.2 0 V7 L4.7 3.5 Z" fill="#000"/></svg>
<div class="abs" style="left:174px;top:658px;width:1px;height:7px;background:#e0c070"></div>
<div class="abs" style="left:176px;top:658px;width:1px;height:7px;background:#e0c070"></div>
<div class="abs" style="left:178px;top:658px;width:1px;height:7px;background:#e0c070"></div>
<div class="abs" style="left:180px;top:658px;width:1px;height:7px;background:#e0c070"></div>
<div class="abs" style="left:515px;top:137px;width:503px;height:533px;border:1px solid #a0a0a0;border-right-color:#f6f6f6;border-bottom-color:#f6f6f6;background:#f0f0f0"></div>
<div class="abs" style="left:516px;top:156px;width:485px;height:498px;background:#ffffc8"></div>
<div class="abs" style="left:516px;top:138px;width:485px;height:19px;background:linear-gradient(#ececec 60%,#dcdcdc);border-bottom:1px solid #a0a0a0"></div>
<div class="m" style="left:520px;top:141px">Nazwa</div>
<div class="abs" style="left:800px;top:143px;width:1px;height:9px;background:#808080"></div>
<div class="m" style="left:803px;top:141px">Roz</div>
<div class="abs" style="left:834px;top:143px;width:1px;height:9px;background:#808080"></div>
<div class="m" style="left:837px;top:141px">Dostęp</div>
<div class="abs" style="left:896px;top:143px;width:1px;height:9px;background:#808080"></div>
<div class="m" style="left:899px;top:141px">Rozmiar</div>
<div class="abs" style="left:954px;top:143px;width:1px;height:9px;background:#808080"></div>
<div class="m" style="left:957px;top:141px">Data</div>
<svg class="abs" style="left:564px;top:146px" width="8" height="5" viewBox="0 0 8 5"><path d="M0 0 H8 L4 4.5 Z" fill="#000"/></svg>
<div class="abs" style="left:516px;top:157px;width:485px;height:497px;overflow:hidden">
<div class="m" style="left:0px;top:-2px;color:#000">138257296_6eead65570_o</div>
<div class="m" style="left:285px;top:-2px;color:#000">jpg</div>
<div class="m" style="left:317px;top:-2px;color:#000">-rw-r--r--</div>
<div class="m" style="left:380px;top:-2px;width:56px;text-align:right;color:#000">256,351</div>
<div class="m" style="left:438px;top:-2px;color:#000">2006-05-</div>
<div class="m" style="left:0px;top:12px;color:#000">146233460_a8b58f6d64_o_d</div>
<div class="m" style="left:285px;top:12px;color:#000">jpg</div>
<div class="m" style="left:317px;top:12px;color:#000">-rw-r--r--</div>
<div class="m" style="left:380px;top:12px;width:56px;text-align:right;color:#000">113,104</div>
<div class="m" style="left:438px;top:12px;color:#000">2006-05-</div>
<div class="m" style="left:0px;top:26px;color:#000">146233604_4a9c23d75c</div>
<div class="m" style="left:285px;top:26px;color:#000">jpg</div>
<div class="m" style="left:317px;top:26px;color:#000">-rw-r--r--</div>
<div class="m" style="left:380px;top:26px;width:56px;text-align:right;color:#000">123,457</div>
<div class="m" style="left:438px;top:26px;color:#000">2006-05-</div>
<div class="m" style="left:0px;top:40px;color:#000">17</div>
<div class="m" style="left:285px;top:40px;color:#000">jpg</div>
<div class="m" style="left:317px;top:40px;color:#000">-rwxrwx---</div>
<div class="m" style="left:380px;top:40px;width:56px;text-align:right;color:#000">190,449</div>
<div class="m" style="left:438px;top:40px;color:#000">2004-11-</div>
<div class="m" style="left:0px;top:54px;color:#000">17369-1</div>
<div class="m" style="left:285px;top:54px;color:#000">jpg</div>
<div class="m" style="left:317px;top:54px;color:#000">-rw-r--r--</div>
<div class="m" style="left:380px;top:54px;width:56px;text-align:right;color:#000">92,928</div>
<div class="m" style="left:438px;top:54px;color:#000">2005-06-</div>
<div class="m" style="left:0px;top:68px;color:#000">18430-1</div>
<div class="m" style="left:285px;top:68px;color:#000">jpg</div>
<div class="m" style="left:317px;top:68px;color:#000">-rw-r--r--</div>
<div class="m" style="left:380px;top:68px;width:56px;text-align:right;color:#000">52,913</div>
<div class="m" style="left:438px;top:68px;color:#000">2004-12-</div>
<div class="m" style="left:0px;top:82px;color:#000">19987-Gentiguo</div>
<div class="m" style="left:285px;top:82px;color:#000">jpg</div>
<div class="m" style="left:317px;top:82px;color:#000">-rw-r--r--</div>
<div class="m" style="left:380px;top:82px;width:56px;text-align:right;color:#000">427,252</div>
<div class="m" style="left:438px;top:82px;color:#000">2005-01-</div>
<div class="m" style="left:0px;top:96px;color:#000">2</div>
<div class="m" style="left:285px;top:96px;color:#000">jpg</div>
<div class="m" style="left:317px;top:96px;color:#000">-rwxrwx---</div>
<div class="m" style="left:380px;top:96px;width:56px;text-align:right;color:#000">183,747</div>
<div class="m" style="left:438px;top:96px;color:#000">2004-04-</div>
<div class="m" style="left:0px;top:110px;color:#000">2</div>
<div class="m" style="left:285px;top:110px;color:#000">jpg</div>
<div class="m" style="left:317px;top:110px;color:#000">-rw-r--r--</div>
<div class="m" style="left:380px;top:110px;width:56px;text-align:right;color:#000">73,057</div>
<div class="m" style="left:438px;top:110px;color:#000">2005-06-</div>
<div class="m" style="left:0px;top:124px;color:#000">2</div>
<div class="m" style="left:285px;top:124px;color:#000">jpg</div>
<div class="m" style="left:317px;top:124px;color:#000">-rw-r--r--</div>
<div class="m" style="left:380px;top:124px;width:56px;text-align:right;color:#000">131,539</div>
<div class="m" style="left:438px;top:124px;color:#000">2005-04-</div>
<div class="m" style="left:0px;top:138px;color:#000">2</div>
<div class="m" style="left:285px;top:138px;color:#000">jpg</div>
<div class="m" style="left:317px;top:138px;color:#000">-rw-r--r--</div>
<div class="m" style="left:380px;top:138px;width:56px;text-align:right;color:#000">57,438</div>
<div class="m" style="left:438px;top:138px;color:#000">2005-05-</div>
<div class="m" style="left:0px;top:152px;color:#000">2</div>
<div class="m" style="left:285px;top:152px;color:#000">jpg</div>
<div class="m" style="left:317px;top:152px;color:#000">-rw-r--r--</div>
<div class="m" style="left:380px;top:152px;width:56px;text-align:right;color:#000">32,757</div>
<div class="m" style="left:438px;top:152px;color:#000">2005-05-</div>
<div class="m" style="left:0px;top:166px;color:#000">2</div>
<div class="m" style="left:285px;top:166px;color:#000">jpg</div>
<div class="m" style="left:317px;top:166px;color:#000">-rw-r--r--</div>
<div class="m" style="left:380px;top:166px;width:56px;text-align:right;color:#000">63,421</div>
<div class="m" style="left:438px;top:166px;color:#000">2005-06-</div>
<div class="m" style="left:0px;top:180px;color:#000">25426-the-brand-new gentoo</div>
<div class="m" style="left:285px;top:180px;color:#000">jpg</div>
<div class="m" style="left:317px;top:180px;color:#000">-rw-r--r--</div>
<div class="m" style="left:380px;top:180px;width:56px;text-align:right;color:#000">32,670</div>
<div class="m" style="left:438px;top:180px;color:#000">2005-06-</div>
<div class="abs" style="left:0;top:194px;width:485px;height:14px;background:#d5d3c0"></div>
<div class="m" style="left:0px;top:194px;color:#000">2</div>
<div class="m" style="left:285px;top:194px;color:#000">jpg</div>
<div class="m" style="left:317px;top:194px;color:#000">-rw-r--r--</div>
<div class="m" style="left:380px;top:194px;width:56px;text-align:right;color:#000">289,159</div>
<div class="m" style="left:438px;top:194px;color:#000">2005-06-</div>
<div class="abs" style="left:0;top:208px;width:485px;height:14px;background:#d5d3c0"></div>
<div class="m" style="left:0px;top:208px;color:#000">2</div>
<div class="m" style="left:285px;top:208px;color:#000">jpg</div>
<div class="m" style="left:317px;top:208px;color:#000">-rw-r--r--</div>
<div class="m" style="left:380px;top:208px;width:56px;text-align:right;color:#000">58,749</div>
<div class="m" style="left:438px;top:208px;color:#000">2005-06-</div>
<div class="abs" style="left:0;top:222px;width:485px;height:14px;background:#d5d3c0"></div>
<div class="m" style="left:0px;top:222px;color:#000">2</div>
<div class="m" style="left:285px;top:222px;color:#000">jpg</div>
<div class="m" style="left:317px;top:222px;color:#000">-rw-r--r--</div>
<div class="m" style="left:380px;top:222px;width:56px;text-align:right;color:#000">358,959</div>
<div class="m" style="left:438px;top:222px;color:#000">2005-06-</div>
<div class="abs" style="left:0;top:236px;width:485px;height:14px;background:#d5d3c0"></div>
<div class="m" style="left:0px;top:236px;color:#000">25506-globeflower-1-back</div>
<div class="m" style="left:285px;top:236px;color:#000">jpg</div>
<div class="m" style="left:317px;top:236px;color:#000">-rw-r--r--</div>
<div class="m" style="left:380px;top:236px;width:56px;text-align:right;color:#000">115,326</div>
<div class="m" style="left:438px;top:236px;color:#000">2005-06-</div>
<div class="abs" style="left:0;top:250px;width:485px;height:14px;background:#d5d3c0"></div>
<div class="m" style="left:0px;top:250px;color:#000">2</div>
<div class="m" style="left:285px;top:250px;color:#000">jpg</div>
<div class="m" style="left:317px;top:250px;color:#000">-rw-r--r--</div>
<div class="m" style="left:380px;top:250px;width:56px;text-align:right;color:#000">360,319</div>
<div class="m" style="left:438px;top:250px;color:#000">2005-06-</div>
<div class="abs" style="left:0;top:264px;width:485px;height:14px;background:#d5d3c0"></div>
<div class="m" style="left:0px;top:264px;color:#000">2</div>
<div class="m" style="left:285px;top:264px;color:#000">jpg</div>
<div class="m" style="left:317px;top:264px;color:#000">-rw-r--r--</div>
<div class="m" style="left:380px;top:264px;width:56px;text-align:right;color:#000">427,368</div>
<div class="m" style="left:438px;top:264px;color:#000">2005-06-</div>
<div class="abs" style="left:0;top:278px;width:485px;height:14px;background:#91adad"></div>
<div class="m" style="left:0px;top:278px;color:#e8f0f0">2</div>
<div class="m" style="left:285px;top:278px;color:#e8f0f0">jpg</div>
<div class="m" style="left:317px;top:278px;color:#e8f0f0">-rw-r--r--</div>
<div class="m" style="left:380px;top:278px;width:56px;text-align:right;color:#e8f0f0">460,450</div>
<div class="m" style="left:438px;top:278px;color:#e8f0f0">2005-06-</div>
<div class="m" style="left:0px;top:292px;color:#000">2</div>
<div class="m" style="left:285px;top:292px;color:#000">jpg</div>
<div class="m" style="left:317px;top:292px;color:#000">-rw-r--r--</div>
<div class="m" style="left:380px;top:292px;width:56px;text-align:right;color:#000">161,611</div>
<div class="m" style="left:438px;top:292px;color:#000">2005-06-</div>
<div class="m" style="left:0px;top:306px;color:#000">2</div>
<div class="m" style="left:285px;top:306px;color:#000">jpg</div>
<div class="m" style="left:317px;top:306px;color:#000">-rw-r--r--</div>
<div class="m" style="left:380px;top:306px;width:56px;text-align:right;color:#000">362,951</div>
<div class="m" style="left:438px;top:306px;color:#000">2005-07-</div>
<div class="m" style="left:0px;top:320px;color:#000">2</div>
<div class="m" style="left:285px;top:320px;color:#000">jpg</div>
<div class="m" style="left:317px;top:320px;color:#000">-rw-r--r--</div>
<div class="m" style="left:380px;top:320px;width:56px;text-align:right;color:#000">21,864</div>
<div class="m" style="left:438px;top:320px;color:#000">2005-06-</div>
<div class="m" style="left:0px;top:334px;color:#000">26292-1</div>
<div class="m" style="left:285px;top:334px;color:#000">jpg</div>
<div class="m" style="left:317px;top:334px;color:#000">-rw-r--r--</div>
<div class="m" style="left:380px;top:334px;width:56px;text-align:right;color:#000">103,707</div>
<div class="m" style="left:438px;top:334px;color:#000">2005-07-</div>
<div class="m" style="left:0px;top:348px;color:#000">26321-thunderstorm</div>
<div class="m" style="left:285px;top:348px;color:#000">jpg</div>
<div class="m" style="left:317px;top:348px;color:#000">-rw-r--r--</div>
<div class="m" style="left:380px;top:348px;width:56px;text-align:right;color:#000">444,911</div>
<div class="m" style="left:438px;top:348px;color:#000">2005-07-</div>
<div class="m" style="left:0px;top:362px;color:#000">26455-waterfall_and_cascade_natura</div>
<div class="m" style="left:285px;top:362px;color:#000">jpg</div>
<div class="m" style="left:317px;top:362px;color:#000">-rw-r--r--</div>
<div class="m" style="left:380px;top:362px;width:56px;text-align:right;color:#000">246,496</div>
<div class="m" style="left:438px;top:362px;color:#000">2005-07-</div>
<div class="m" style="left:0px;top:376px;color:#000">26484-KDE34bar</div>
<div class="m" style="left:285px;top:376px;color:#000">png</div>
<div class="m" style="left:317px;top:376px;color:#000">-rw-r--r--</div>
<div class="m" style="left:380px;top:376px;width:56px;text-align:right;color:#000">463,269</div>
<div class="m" style="left:438px;top:376px;color:#000">2005-07-</div>
<div class="m" style="left:0px;top:390px;color:#000">26531-LinuxTechnology</div>
<div class="m" style="left:285px;top:390px;color:#000">jpg</div>
<div class="m" style="left:317px;top:390px;color:#000">-rw-r--r--</div>
<div class="m" style="left:380px;top:390px;width:56px;text-align:right;color:#000">29,807</div>
<div class="m" style="left:438px;top:390px;color:#000">2005-07-</div>
<div class="m" style="left:0px;top:404px;color:#000">26532-Linnex.OS</div>
<div class="m" style="left:285px;top:404px;color:#000">png</div>
<div class="m" style="left:317px;top:404px;color:#000">-rw-r--r--</div>
<div class="m" style="left:380px;top:404px;width:56px;text-align:right;color:#000">180,550</div>
<div class="m" style="left:438px;top:404px;color:#000">2005-07-</div>
<div class="m" style="left:0px;top:418px;color:#000">26546-kde_vvv_klorg</div>
<div class="m" style="left:285px;top:418px;color:#000">jpg</div>
<div class="m" style="left:317px;top:418px;color:#000">-rw-r--r--</div>
<div class="m" style="left:380px;top:418px;width:56px;text-align:right;color:#000">503,509</div>
<div class="m" style="left:438px;top:418px;color:#000">2005-07-</div>
<div class="m" style="left:0px;top:432px;color:#000">26594-simpleKDE</div>
<div class="m" style="left:285px;top:432px;color:#000">png</div>
<div class="m" style="left:317px;top:432px;color:#000">-rw-r--r--</div>
<div class="m" style="left:380px;top:432px;width:56px;text-align:right;color:#000">213,058</div>
<div class="m" style="left:438px;top:432px;color:#000">2005-07-</div>
<div class="m" style="left:0px;top:446px;color:#000">26630-1</div>
<div class="m" style="left:285px;top:446px;color:#000">jpg</div>
<div class="m" style="left:317px;top:446px;color:#000">-rw-r--r--</div>
<div class="m" style="left:380px;top:446px;width:56px;text-align:right;color:#000">93,738</div>
<div class="m" style="left:438px;top:446px;color:#000">2005-07-</div>
<div class="m" style="left:0px;top:460px;color:#000">26697-1</div>
<div class="m" style="left:285px;top:460px;color:#000">jpg</div>
<div class="m" style="left:317px;top:460px;color:#000">-rw-r--r--</div>
<div class="m" style="left:380px;top:460px;width:56px;text-align:right;color:#000">138,874</div>
<div class="m" style="left:438px;top:460px;color:#000">2005-07-</div>
<div class="m" style="left:0px;top:474px;color:#000">26697-2</div>
<div class="m" style="left:285px;top:474px;color:#000">jpg</div>
<div class="m" style="left:317px;top:474px;color:#000">-rw-r--r--</div>
<div class="m" style="left:380px;top:474px;width:56px;text-align:right;color:#000">189,856</div>
<div class="m" style="left:438px;top:474px;color:#000">2005-07-</div>
<div class="m" style="left:0px;top:488px;color:#000">27067-1</div>
<div class="m" style="left:285px;top:488px;color:#000">jpg</div>
<div class="m" style="left:317px;top:488px;color:#000">-rw-r--r--</div>
<div class="m" style="left:380px;top:488px;width:56px;text-align:right;color:#000">50,307</div>
<div class="m" style="left:438px;top:488px;color:#000">2005-07-</div>
</div>
<div class="sb" style="left:1001px;top:138px;width:15px;height:516px;border-left:1px solid #a8a8b0;border-right:1px solid #a8a8b0"></div>
<div class="arr" style="left:1001px;top:138px;width:15px;height:15px;border-radius:3px 3px 0 0"></div>
<svg class="abs" style="left:1005px;top:143px" width="7" height="5" viewBox="0 0 7 5"><path d="M0 4.7 H7 L3.5 0.2 Z" fill="#000"/></svg>
<div class="arr" style="left:1001px;top:639px;width:15px;height:15px;border-radius:0 0 3px 3px"></div>
<svg class="abs" style="left:1005px;top:645px" width="7" height="5" viewBox="0 0 7 5"><path d="M0 0.3 H7 L3.5 4.8 Z" fill="#000"/></svg>
<div class="sl" style="left:1001px;top:173px;width:15px;height:81px"></div>
<div class="abs" style="left:1005px;top:209px;width:7px;height:1px;background:#e0c070"></div>
<div class="abs" style="left:1005px;top:211px;width:7px;height:1px;background:#e0c070"></div>
<div class="abs" style="left:1005px;top:213px;width:7px;height:1px;background:#e0c070"></div>
<div class="abs" style="left:1005px;top:215px;width:7px;height:1px;background:#e0c070"></div>
<div class="sb" style="left:516px;top:654px;width:485px;height:15px;border-top:1px solid #a8a8b0;border-bottom:1px solid #a8a8b0"></div>
<div class="slh" style="left:530px;top:654px;width:329px;height:15px"></div>
<div class="arr" style="left:516px;top:654px;width:15px;height:15px;border-radius:3px 0 0 3px"></div>
<svg class="abs" style="left:521px;top:658px" width="5" height="7" viewBox="0 0 5 7"><path d="M4.8 0 V7 L0.3 3.5 Z" fill="#000"/></svg>
<div class="arr" style="left:986px;top:654px;width:15px;height:15px;border-radius:0 3px 3px 0"></div>
<svg class="abs" style="left:992px;top:658px" width="5" height="7" viewBox="0 0 5 7"><path d="M0.2 0 V7 L4.7 3.5 Z" fill="#000"/></svg>
<div class="abs" style="left:690px;top:658px;width:1px;height:7px;background:#e0c070"></div>
<div class="abs" style="left:692px;top:658px;width:1px;height:7px;background:#e0c070"></div>
<div class="abs" style="left:694px;top:658px;width:1px;height:7px;background:#e0c070"></div>
<div class="abs" style="left:696px;top:658px;width:1px;height:7px;background:#e0c070"></div>
<div class="s" style="left:9px;top:674px;font-size:11px;line-height:14px;letter-spacing:-0.35px">Katalogi:</div>
<div class="s" style="left:54px;top:674px;font-size:11px;line-height:14px;letter-spacing:0px">28</div>
<div class="s" style="left:175px;top:674px;font-size:11px;line-height:14px;letter-spacing:-0.5px">Pliki:</div>
<div class="s" style="left:199px;top:674px;font-size:11px;line-height:14px;letter-spacing:0px">87</div>
<div class="s" style="left:321px;top:674px;font-size:11px;line-height:14px;letter-spacing:0px">Zaznaczone:</div>
<div class="s" style="left:389px;top:674px;font-size:11px;line-height:14px;letter-spacing:0px">4</div>
<div class="s" style="left:517px;top:674px;font-size:11px;line-height:14px;letter-spacing:-0.35px">Katalogi:</div>
<div class="s" style="left:563px;top:674px;font-size:11px;line-height:14px;letter-spacing:0px">0</div>
<div class="s" style="left:683px;top:674px;font-size:11px;line-height:14px;letter-spacing:-0.5px">Pliki:</div>
<div class="s" style="left:707px;top:674px;font-size:11px;line-height:14px;letter-spacing:0px">210</div>
<div class="s" style="left:829px;top:674px;font-size:11px;line-height:14px;letter-spacing:0px">Zaznaczone:</div>
<div class="s" style="left:897px;top:674px;font-size:11px;line-height:14px;letter-spacing:0px">6</div>
<div class="btn" style="left:6px;top:698px;width:99px;height:26px;line-height:24px;letter-spacing:0.64px;text-indent:0.64px">F1 Pomoc</div>
<div class="btn" style="left:107px;top:698px;width:99px;height:26px;line-height:24px;letter-spacing:0.6px;text-indent:0.6px">F2 Dostęp</div>
<div class="btn" style="left:208px;top:698px;width:100px;height:26px;line-height:24px;letter-spacing:0.6px;text-indent:0.6px">F3 Podgląd</div>
<div class="btn" style="left:310px;top:698px;width:99px;height:26px;line-height:24px;letter-spacing:0.6px;text-indent:0.6px">F4 Edycja</div>
<div class="btn" style="left:411px;top:698px;width:100px;height:26px;line-height:24px;letter-spacing:0.5px;text-indent:0.5px">F5 Kopiowanie</div>
<div class="btn" style="left:513px;top:698px;width:100px;height:26px;line-height:24px;letter-spacing:0.5px;text-indent:0.5px">F6 Zm. nazwy</div>
<div class="btn" style="left:615px;top:698px;width:99px;height:26px;line-height:24px;letter-spacing:0.36px;text-indent:0.36px">F7 Nowy katalog</div>
<div class="btn" style="left:716px;top:698px;width:100px;height:26px;line-height:24px;letter-spacing:0.6px;text-indent:0.6px">F8 Usuń</div>
<div class="btn" style="left:818px;top:698px;width:100px;height:26px;line-height:24px;letter-spacing:0.6px;text-indent:0.6px">F9 Paker</div>
<div class="btn" style="left:920px;top:698px;width:99px;height:26px;line-height:24px;letter-spacing:0.67px;text-indent:0.67px">F10 Koniec</div>
<div class="abs" style="left:316px;top:253px;width:306px;height:243px;border:1px solid #0c3434;border-radius:4px 4px 0 0;background:#e8e8e8;overflow:hidden">
<svg class="abs" style="left:0;top:0" width="304" height="21" viewBox="0 0 304 21">
<defs><linearGradient id="dg" x1="0" y1="0" x2="0" y2="1"><stop offset="0" stop-color="#ffffff"/><stop offset="1" stop-color="#e8e8e8"/></linearGradient>
<linearGradient id="dg2" x1="0" y1="0" x2="0" y2="1"><stop offset="0" stop-color="#6c5c7c"/><stop offset="1" stop-color="#4a4058"/></linearGradient></defs>
<rect width="304" height="21" fill="url(#dg)"/>
<path d="M189 21 C209 21 213 0 234 0 L304 0 L304 21 Z" fill="#c898c8"/>
<path d="M201 21 C221 21 222 0 242 0 L304 0 L304 21 Z" fill="url(#dg2)"/>
<g stroke="#fff" stroke-width="2"><path d="M275.5 8 V16 M271.5 12 H279.5"/><path d="M289 8.5 L296 15.5 M296 8.5 L289 15.5"/></g>
</svg>
<svg class="abs" style="left:8px;top:0px" width="18" height="18" viewBox="0 0 18 18"><circle cx="9.2" cy="7.5" r="3.6" fill="#f6c414" stroke="#5a4a10" stroke-width="0.8"/><circle cx="4.6" cy="13.5" r="3.6" fill="#f6c414" stroke="#5a4a10" stroke-width="0.8"/><circle cx="12.6" cy="15" r="3.6" fill="#f6c414" stroke="#5a4a10" stroke-width="0.8"/></svg>
<div class="s" style="left:31px;top:3px;font-size:12px;line-height:14px;font-weight:bold;color:#000">Usuwanie plików/katalogów</div><div class="s" style="left:32px;top:4px;font-size:12px;line-height:14px;font-weight:bold;color:#fff">Usuwanie plików/katalogów</div>
<div class="abs" style="left:4px;top:26px;width:208px;height:190px;background:#ffffc8;border-left:1px solid #909090;border-top:1px solid #909090"></div>
<div class="abs" style="left:5px;top:27px;width:145px;height:14px;background:#ffd878"></div>
<div class="abs" style="left:5px;top:27px;width:145px;height:14px;border:1px dotted #2030a0"></div>
<div class="s" style="left:7px;top:27px;font-size:9px;line-height:14px;font-weight:bold;letter-spacing:0.52px">25517-evening.jpg</div>
<div class="abs" style="left:5px;top:41px;width:145px;height:14px;background:#d5d3c0"></div>
<div class="s" style="left:7px;top:41px;font-size:9px;line-height:14px;font-weight:bold;letter-spacing:0.52px">25516-deepshine.jpg</div>
<div class="s" style="left:7px;top:55px;font-size:9px;line-height:14px;font-weight:bold;letter-spacing:0.52px">25506-globeflower-1-back.jpg</div>
<div class="abs" style="left:5px;top:69px;width:145px;height:14px;background:#d5d3c0"></div>
<div class="s" style="left:7px;top:69px;font-size:9px;line-height:14px;font-weight:bold;letter-spacing:0.52px">25435-NightGrass.jpg</div>
<div class="s" style="left:7px;top:83px;font-size:9px;line-height:14px;font-weight:bold;letter-spacing:0.52px">25425-gentoo.jpg</div>
<div class="abs" style="left:5px;top:97px;width:145px;height:14px;background:#d5d3c0"></div>
<div class="s" style="left:7px;top:97px;font-size:9px;line-height:14px;font-weight:bold;letter-spacing:0.52px">25421-fucsia.jpg</div>
<div class="abs" style="left:6px;top:222px;width:13px;height:13px;border:1px solid #8a8a8a;border-radius:2px;background:linear-gradient(#fff,#e8e8e8)"></div>
<div class="s" style="left:24px;top:222px;font-size:9px;line-height:13px;font-weight:bold;letter-spacing:0.67px"><span style="text-decoration:underline">C</span>zyszczenie pliku</div>
<div class="btn" style="left:216px;top:181px;width:84px;height:27px;line-height:25px;border:1px solid #101010"><span style="text-decoration:underline">A</span>kceptuj</div>
<div class="btn" style="left:216px;top:211px;width:84px;height:26px;line-height:24px"><span style="text-decoration:underline">K</span>oniec</div>
</div>
</body></html>
